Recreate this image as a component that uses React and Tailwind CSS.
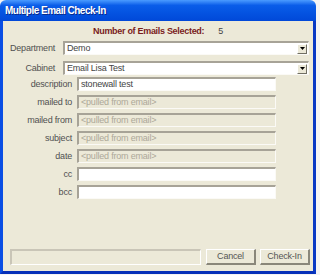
import React from 'react';

const font = { fontFamily: '"Liberation Sans", Arial, sans-serif' };

const sunken =
  'border-t-2 border-l-2 border-b border-r border-t-[#a7a397] border-l-[#a7a397] border-b-[#fbfaf6] border-r-[#fbfaf6]';

const SelectRow = ({ label, value, className }) => (
  <div className={`flex items-center h-[14px] ${className}`}>
    <div className="w-[52px] text-right text-[9px] tracking-[-0.2px] text-[#505050] leading-none">{label}</div>
    <div className={`ml-[8px] w-[246px] h-[14px] bg-white flex items-center ${sunken}`}>
      <span className="flex-1 pl-[2px] text-[9px] tracking-[-0.2px] text-[#444] leading-none">{value}</span>
      <span className="w-[10px] h-[10px] mr-[1px] bg-[#ece9d8] border-t border-l border-t-white border-l-white border-b border-r border-b-[#716f64] border-r-[#716f64] flex items-center justify-center">
        <svg width="5" height="3" viewBox="0 0 5 3"><path d="M0 0h5L2.5 3z" fill="#000" /></svg>
      </span>
    </div>
  </div>
);

const InputRow = ({ label, value, disabled }) => (
  <div className="flex items-center h-[14px]">
    <div className="w-[69px] text-right text-[9px] tracking-[-0.2px] text-[#505050] leading-none">{label}</div>
    <div
      className={`ml-[5px] w-[199px] h-[14px] flex items-center ${sunken} ${disabled ? 'bg-[#ece9d8]' : 'bg-white'}`}
    >
      <span
        className={`pl-[2px] text-[9px] tracking-[-0.2px] leading-none ${disabled ? 'text-[#aca899]' : 'text-[#444]'}`}
      >
        {value}
      </span>
    </div>
  </div>
);

const Button = ({ children, className }) => (
  <div
    className={`w-[50px] h-[16px] flex items-center justify-center bg-[#ece9d8] border-t border-l border-t-white border-l-white border-b-2 border-r-2 border-b-[#8a877a] border-r-[#8a877a] text-[9px] tracking-[-0.2px] text-[#555] leading-none ${className}`}
  >
    {children}
  </div>
);

export default function App() {
  return (
    <div className="w-[320px] h-[275px] bg-[#f4f4f4]" style={font}>
      <div className="w-[316px] h-[274px] flex flex-col rounded-t-[6px] overflow-hidden">
        <div className="h-[21px] shrink-0 flex items-center pl-[5px] bg-linear-to-b from-[#4a9bff] via-[#0a5de9] via-25% to-[#0148d8]">
          <span className="text-white font-bold text-[10px] tracking-[-0.5px] leading-none [text-shadow:1px_1px_0_#0a2a8a]">
            Multiple Email Check-In
          </span>
        </div>
        <div className="flex-1 flex flex-col bg-[#ece9d8] border-l-[3px] border-r-[3px] border-b-[3px] border-l-[#0a4ee4] border-r-[#0838c4] border-b-[#0630b8] pt-[3px] pb-[6px]">
          <div className="h-[14px] flex items-center pl-[90px] text-[9px] font-bold tracking-[-0.3px] leading-none text-[#7a1c1c]">
            <span>Number of Emails Selected:</span>
            <span className="ml-[14px] font-normal text-[#444]">5</span>
          </div>
          <SelectRow label="Department" value="Demo" className="mt-[3px]" />
          <SelectRow label="Cabinet" value="Email Lisa Test" className="mt-[6px]" />
          <div className="mt-[2px] flex flex-col gap-[4px]">
            <InputRow label="description" value="stonewall test" />
            <InputRow label="mailed to" value="<pulled from email>" disabled />
            <InputRow label="mailed from" value="<pulled from email>" disabled />
            <InputRow label="subject" value="<pulled from email>" disabled />
            <InputRow label="date" value="<pulled from email>" disabled />
            <InputRow label="cc" value="" />
            <InputRow label="bcc" value="" />
          </div>
          <div className="flex-1" />
          <div className="flex items-center">
            <div className="ml-[7px] w-[191px] h-[16px] border-t-2 border-l-2 border-b border-r border-t-[#c9c5b7] border-l-[#c9c5b7] border-b-white border-r-white" />
            <Button className="ml-[5px]">Cancel</Button>
            <Button className="ml-[4px]">Check-In</Button>
          </div>
        </div>
      </div>
    </div>
  );
}
